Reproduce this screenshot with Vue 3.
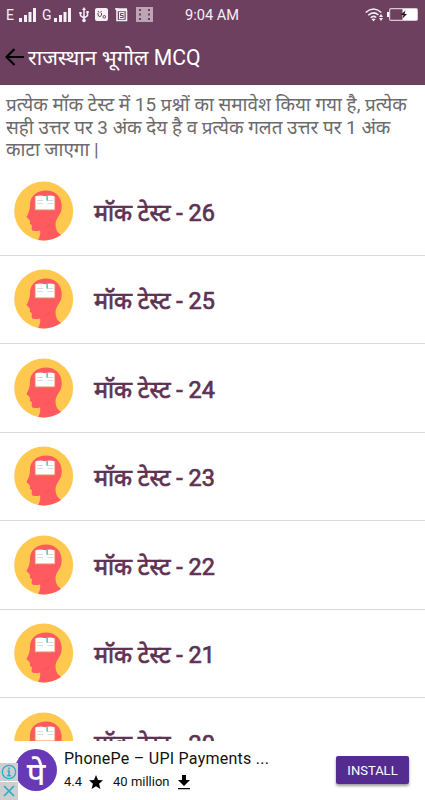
<template>
  <div class="screen">
    <header class="top">
      <div class="status-bar">
        <span class="network">E</span>
        <svg class="signal" width="17" height="14" viewBox="0 0 17 14">
          <path d="M0 10h3v4H0zM5 7h3v7H5zM9.500 4h3v10h-3zM14 0h3v14h-3z" fill="#f6eff4" />
        </svg>
        <span class="network second">G</span>
        <svg class="signal" width="17" height="14" viewBox="0 0 17 14">
          <path d="M0 10h3v4H0zM5 7h3v7H5zM9.500 4h3v10h-3zM14 0h3v14h-3z" fill="#f6eff4" />
        </svg>
        <svg class="usb" width="10" height="16" viewBox="0 0 10 16" fill="none" stroke="#f6eff4" stroke-width="1.500">
          <path d="M5 2v11M1.500 6v2.500L5 11l3.500-2.500V5" />
          <path d="M5 0l2 3H3zM0.300 5h2.400v2H0.300zM7.300 4h2.400v2H7.300z" fill="#f6eff4" stroke="none" />
          <circle cx="5" cy="13.500" r="1.800" fill="#f6eff4" stroke="none" />
        </svg>
        <svg class="app-a" width="13" height="13" viewBox="0 0 13 13">
          <rect width="13" height="13" rx="2" fill="#f6eff4" />
          <path d="M3 3l1 1.500M6.500 3L5.500 4.500M3 5v2l1.700 2L6.500 7V5" fill="none" stroke="#6e4060" stroke-width="1" />
          <circle cx="9.300" cy="8.800" r="1.300" fill="none" stroke="#6e4060" />
        </svg>
        <svg class="app-s" width="13" height="14" viewBox="0 0 13 14">
          <path d="M0 1h12M2 0v12.500h9.500V2.500H2" fill="none" stroke="#f6eff4" stroke-width="1.600" />
          <rect x="4" y="4" width="5.500" height="7" fill="#f6eff4" />
          <path d="M8.500 5.500h-3v2h2.700v2H5" fill="none" stroke="#6e4060" />
        </svg>
        <svg class="film" width="17" height="15" viewBox="0 0 17 15">
          <rect width="17" height="15" fill="#bda5b8" />
          <path d="M3 2h2v2H3zM3 6.500h2v2H3zM3 11h2v2H3zM12 2h2v2h-2zM12 6.500h2v2h-2zM12 11h2v2h-2z" fill="#6e4060" />
        </svg>
        <span class="clock">9:04 AM</span>
        <svg class="wifi" width="19" height="14" viewBox="0 0 19 14" fill="none" stroke="#f6eff4" stroke-width="1.500">
          <path d="M0.700 4.500Q8.500-2.500 16.300 4.500M3.200 7.200Q8.500 2.600 13.500 7M5.700 9.700Q8.500 7.200 11.200 9.500" />
          <path d="M6.500 11.300Q8.500 9.500 10.500 11.300L8.500 13.500zM16 6l2 3h-4zM16 13l-2-3h4z" fill="#f6eff4" stroke="none" />
        </svg>
        <svg class="battery" width="31" height="13" viewBox="0 0 31 13">
          <rect x="2.600" y="0.600" width="27.800" height="11.800" rx="1.500" fill="none" stroke="#d8c8d3" stroke-width="1.200" />
          <path d="M15.500 1H30v11H15.500zM0 4h2v5H0z" fill="#fff" />
          <path d="M18.500 2.500l-5 4.500h3l-1 3.500 4.500-4.500h-2.500z" fill="#22131e" />
        </svg>
      </div>
      <div class="app-bar">
        <svg class="back" width="19" height="18" viewBox="0 0 19 18">
          <path d="M9.500 1L1.500 9l8 8M2 9h17" fill="none" stroke="#000" stroke-width="2.200" />
        </svg>
        <h1>राजस्थान भूगोल MCQ</h1>
      </div>
    </header>

    <p class="intro">
      <span v-for="line in intro" :key="line">{{ line }}</span>
    </p>

    <ul class="tests">
      <li v-for="n in tests" :key="n">
        <svg class="avatar" width="60" height="60" viewBox="0 0 60 60">
          <circle cx="29.700" cy="30" r="29.500" fill="#ffc84f" />
          <path
            d="M24.300 59Q27 54 26 49.500Q18.500 51 17.700 48.500Q17.500 47 18 44.500L15.700 42.500Q16.500 41 15.500 39L12.500 36Q15.500 31 16 26C15 15 23 9.500 32 9.500C42 9.500 49 17 47.500 28C47 34 41.500 37 41.500 43.500Q41.500 50.500 47 54Q37 61 24.300 59z"
            fill="#ff5a5f"
          />
          <path d="M27 47.500Q34 46 36.500 42Q35.500 46.500 27 47.500z" fill="#e94f58" />
          <rect x="20.700" y="15.500" width="20.600" height="14" fill="#e88a5a" />
          <path d="M21.500 15.200q5-1.200 9.500 0q5-1.200 9.500 0v13.300h-19z" fill="#fff" />
          <path d="M23 19.500h6M23 22.500h6M33.500 19.500h6M33.500 22.500h6" stroke="#d4dada" stroke-width="0.900" />
          <path d="M32.300 14.700h1.700v5.500l-0.850-1-0.850 1z" fill="#62c9b7" />
        </svg>
        <span>मॉक टेस्ट - {{ n }}</span>
      </li>
    </ul>

    <footer class="ad">
      <div class="ad-marks">
        <span>
          <svg width="16" height="16" viewBox="0 0 16 16" fill="none" stroke="#29aec9" stroke-width="1.300">
            <circle cx="8" cy="8" r="6.700" />
            <path d="M8 3.500v2M6.500 7H8v4.500M6 11.700h4" stroke-width="1.600" />
          </svg>
        </span>
        <span>
          <svg width="16" height="16" viewBox="0 0 16 16">
            <path d="M3 3l10 10M13 3L3 13" stroke="#29aec9" stroke-width="1.700" />
          </svg>
        </span>
      </div>
      <div class="ad-logo">पे</div>
      <div class="ad-info">
        <div class="ad-title">PhonePe – UPI Payments ...</div>
        <div class="ad-meta">
          <span class="rating">4.4</span>
          <svg class="star" width="14" height="14" viewBox="0 0 14 14">
            <path d="M7 0l2 4.900 5 .4-3.900 3.400L11.400 14 7 11.200 2.600 14l1.300-5.300L0 5.300l5-.4z" />
          </svg>
          <span class="downloads">40 million</span>
          <svg class="download" width="12" height="15" viewBox="0 0 12 15">
            <path d="M4 0h4v5h4l-6 6-6-6h4zM0 13h12v1.300H0z" />
          </svg>
        </div>
      </div>
      <button class="install">INSTALL</button>
    </footer>
  </div>
</template>

<script setup>
const intro = [
  'प्रत्येक मॉक टेस्ट में 15 प्रश्नों का समावेश किया गया है, प्रत्येक',
  'सही उत्तर पर 3 अंक देय है व प्रत्येक गलत उत्तर पर 1 अंक',
  'काटा जाएगा |'
]

const tests = [26, 25, 24, 23, 22, 21, 20]
</script>

<style>
body {
  margin: 0;
}
</style>

<style scoped>
.screen {
  display: flex;
  flex-direction: column;
  width: 425px;
  height: 800px;
  overflow: hidden;
  background: #fff;
  font-family: Roboto, 'Noto Sans', 'Noto Sans Devanagari', sans-serif;
}

svg {
  display: block;
  flex: none;
}

.top {
  flex: none;
  height: 85px;
  background: #6e4060;
}

.status-bar {
  display: flex;
  align-items: center;
  height: 29px;
  padding-left: 6px;
  color: #f6eff4;
}

.network {
  width: 9px;
  margin-right: 4px;
  font-size: 14px;
}

.network.second {
  margin-left: 6px;
  margin-right: 3px;
}

.usb {
  margin-left: 8px;
}

.app-a {
  margin-left: 6px;
}

.app-s {
  margin-left: 7px;
}

.film {
  margin-left: 8px;
}

.clock {
  width: 60px;
  margin-left: 32px;
  font-size: 14.6px;
  white-space: nowrap;
}

.wifi {
  margin-left: 120px;
}

.battery {
  margin-left: 3px;
}

.app-bar {
  display: flex;
  align-items: center;
  height: 56px;
  padding-left: 5px;
}

h1 {
  margin: 2px 0 0 4px;
  color: #fff;
  font-size: 21.2px;
  font-weight: 400;
  line-height: 30px;
  white-space: nowrap;
}

.intro {
  flex: none;
  height: 73px;
  margin: 0;
  padding: 9px 0 0 6px;
  color: #6b6b6b;
  font-size: 18.9px;
  line-height: 22.5px;
}

.intro span {
  display: block;
  white-space: nowrap;
}

.tests {
  flex: 1;
  min-height: 0;
  margin: 0;
  padding: 0;
  overflow: hidden;
  list-style: none;
}

.tests li {
  display: flex;
  align-items: center;
  box-sizing: border-box;
  height: 88.5px;
  padding-left: 14px;
  border-bottom: 1px solid #dadada;
  color: #5d3252;
  font-size: 23.4px;
  font-weight: 400;
  line-height: 32px;
  -webkit-text-stroke: 0.7px #5d3252;
}

.tests span {
  margin: 4px 0 0 20px;
  white-space: nowrap;
}

.ad {
  display: flex;
  flex: none;
  height: 59px;
  background: #fff;
}

.ad-marks {
  display: flex;
  flex-direction: column;
  gap: 1px;
  width: 18px;
  margin-top: 22px;
  z-index: 1;
}

.ad-marks span {
  display: flex;
  align-items: center;
  justify-content: center;
  height: 18px;
  background: #cecdd0;
}

.ad-logo {
  width: 42px;
  height: 42px;
  margin: 8px 0 0 -3px;
  border-radius: 50%;
  background: #6739b7;
  color: #fff;
  font-size: 32px;
  font-weight: 500;
  line-height: 50px;
  text-align: center;
}

.ad-info {
  width: 272px;
  margin-left: 7px;
  color: #111;
}

.ad-title {
  margin-top: 8px;
  font-size: 16px;
  line-height: 20px;
  letter-spacing: 0.25px;
  white-space: nowrap;
}

.ad-meta {
  display: flex;
  align-items: center;
  margin-top: 5px;
  font-size: 13px;
  line-height: 16px;
}

.star {
  margin-left: 7px;
}

.downloads {
  margin-left: 10px;
  white-space: nowrap;
}

.download {
  margin-left: 8px;
}

.install {
  width: 73px;
  height: 28px;
  margin-top: 15px;
  padding: 0;
  border: 0;
  border-radius: 2px;
  background: #542c91;
  box-shadow: 0 2px 3px rgba(0, 0, 0, 0.4);
  color: #fff;
  font-family: Roboto, sans-serif;
  font-size: 13px;
}
</style>
